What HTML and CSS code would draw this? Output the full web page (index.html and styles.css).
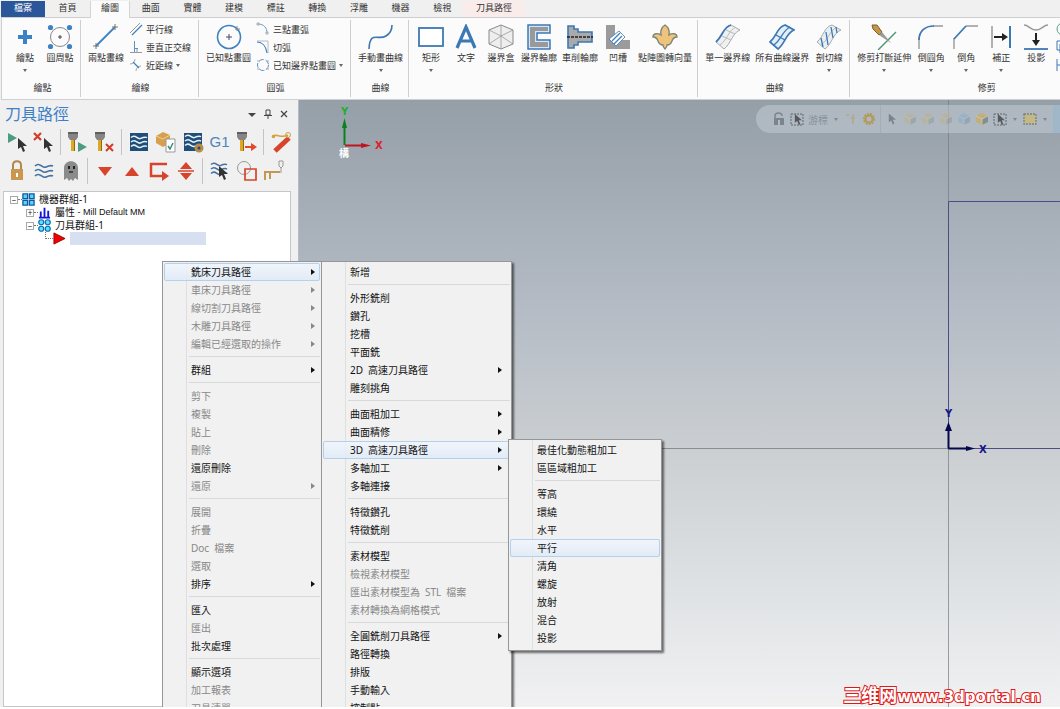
FILE: index.html
```html
<!DOCTYPE html>
<html lang="zh-Hant">

<head>
    <meta charset="UTF-8">
    <meta name="viewport" content="width=device-width, initial-scale=1.0">
    <title>刀具路徑</title>
    <link rel="stylesheet" href="styles.css">
</head>

<body>

    <!-- Shared icon shapes -->
    <svg class="sprite" aria-hidden="true">
        <symbol id="cursor" viewBox="0 0 10 14"><path d="M1 0v11l3-2 2 5 2-1-2-5h4z" fill="#333"/></symbol>
        <symbol id="drill" viewBox="0 0 12 22"><path d="M1 1h10v5l-2 3H3L1 6z" fill="#858585"/><path d="M1 1h10v2H1z" fill="#5f5f5f"/><path d="M4 9h4v11H4z" fill="#e0a820"/><path d="M7 9h1v11H7z" fill="#8a6a20"/></symbol>
        <symbol id="waves" viewBox="0 0 20 18"><path d="M1 4c5-5 7 3 11 1s5-2 7-1M1 9c5-5 7 3 11 1s5-2 7-1M1 14c5-5 7 3 11 1s5-2 7-1" fill="none" stroke="currentColor" stroke-width="1.7"/></symbol>
        <symbol id="cube" viewBox="0 0 14 14"><path d="M1 4l6-3 6 3v6l-6 3-6-3z" fill="currentColor"/><path d="M7 7l6-3v6l-6 3z" fill="#5c7893" opacity=".6"/><path d="M1 4l6 3 6-3M7 7v6" fill="none" stroke="#ccd3d6" stroke-width=".7"/></symbol>
    </svg>

    <div class="app">

        <!-- Ribbon -->
        <header class="ribbon">
            <nav class="tabs">
                <button class="tab tab-file">檔案</button>
                <button class="tab tab-home">首頁</button>
                <button class="tab tab-active">繪圖</button>
                <div class="tab-group">
                    <button class="tab">曲面</button>
                    <button class="tab">實體</button>
                    <button class="tab">建模</button>
                    <button class="tab">標註</button>
                    <button class="tab">轉換</button>
                    <button class="tab">浮雕</button>
                    <button class="tab">機器</button>
                    <button class="tab">檢視</button>
                </div>
                <button class="tab tab-path">刀具路徑</button>
            </nav>

            <div class="ribbon-body">
                <section class="group group-first">
                    <div class="tools">
                        <button class="tool"><svg viewBox="0 0 26 26"><path d="M13 6v14M6 13h14" stroke="#3c82c4" stroke-width="4"/></svg>繪點<i class="caret"></i></button>
                        <button class="tool"><svg viewBox="0 0 26 26"><circle cx="13" cy="13" r="9.5" fill="none" stroke="#888"/><path d="M13 11v4M11 13h4" stroke="#444"/><g fill="#3c82c4"><circle cx="3.500" cy="3.500" r="2.600"/><circle cx="22.500" cy="3.500" r="2.600"/><circle cx="3.500" cy="22.500" r="2.600"/><circle cx="22.500" cy="22.500" r="2.600"/></g></svg>圓周點</button>
                    </div>
                    <h2>繪點</h2>
                </section>

                <section class="group">
                    <div class="tools">
                        <button class="tool"><svg viewBox="0 0 26 26"><path d="M3 22L22 3" stroke="#3c82c4" stroke-width="1.800"/><path d="M3 19v6M0 22h6M22 0v6M19 3h6" stroke="#777"/></svg>兩點畫線</button>
                        <div class="small-tools">
                            <button class="small-tool"><svg viewBox="0 0 14 14"><path d="M1 11L11 1" stroke="#999"/><path d="M3 13L13 3" stroke="#3c82c4" stroke-width="1.300"/></svg>平行線</button>
                            <button class="small-tool"><svg viewBox="0 0 14 14"><path d="M1 12.500h12M8 9v3" stroke="#999"/><path d="M5.500 1v11M6 8.500h3" stroke="#5b91c6"/></svg>垂直正交線</button>
                            <button class="small-tool"><svg viewBox="0 0 14 14"><path d="M1 6c3 0 5-2 5-5M7 13c0-3 2-5 5-5" fill="none" stroke="#aaa"/><path d="M4 4l6 6" stroke="#3c82c4" stroke-width="1.300"/></svg>近距線<i class="caret"></i></button>
                        </div>
                    </div>
                    <h2>繪線</h2>
                </section>

                <section class="group">
                    <div class="tools">
                        <button class="tool"><svg viewBox="0 0 26 26"><circle cx="13" cy="13" r="11.500" fill="none" stroke="#3c82c4" stroke-width="1.600"/><path d="M13 10v6M10 13h6" stroke="#446"/><path d="M21 2v5M19 5h5" stroke="#888"/></svg>已知點畫圓</button>
                        <div class="small-tools">
                            <button class="small-tool"><svg viewBox="0 0 14 14"><path d="M2 2c6 0 9 4 9 9" fill="none" stroke="#6a9bcc"/><path d="M0 2h4M2 0v4M9 11h4M11 9v4" stroke="#aaa"/></svg>三點畫弧</button>
                            <button class="small-tool"><svg viewBox="0 0 14 14"><path d="M1 1h11v12" fill="none" stroke="#bbb"/><path d="M1 2c5 0 9 4 10 11" fill="none" stroke="#3c82c4" stroke-width="1.200"/></svg>切弧</button>
                            <button class="small-tool"><svg viewBox="0 0 14 14"><circle cx="7" cy="7" r="5.500" fill="none" stroke="#5b91c6" stroke-dasharray="5 2"/><path d="M1 3h3M10 3h3M1 11h3M10 11h3" stroke="#aaa"/></svg>已知邊界點畫圓<i class="caret"></i></button>
                        </div>
                    </div>
                    <h2>圓弧</h2>
                </section>

                <section class="group">
                    <div class="tools">
                        <button class="tool"><svg viewBox="0 0 26 26"><path d="M1 25C2 6 10 17 18 12c5-3 6-7 6-11" fill="none" stroke="#3c78b4" stroke-width="1.600"/></svg>手動畫曲線<i class="caret"></i></button>
                    </div>
                    <h2>曲線</h2>
                </section>

                <section class="group">
                    <div class="tools">
                        <button class="tool"><svg viewBox="0 0 26 26"><rect x="1" y="4" width="24" height="18" fill="#fff" stroke="#3c78b4" stroke-width="1.800"/></svg>矩形<i class="caret"></i></button>
                        <button class="tool"><svg viewBox="0 0 26 26"><path d="M4 24L13 3l9 21M7 17h12" fill="none" stroke="#3c78b4" stroke-width="3.200"/></svg>文字</button>
                        <button class="tool"><svg viewBox="0 0 26 26"><path d="M13 1l12 5v14l-12 5-12-5V6z" fill="#eee" stroke="#888"/><path d="M1 6l12 6 12-6M13 12v13M13 1v11M1 20l12-8 12 8" fill="none" stroke="#999" stroke-width=".8"/></svg>邊界盒</button>
                        <button class="tool"><svg viewBox="0 0 26 26"><path d="M2 1h22v8H11v7h13v9H2z" fill="#d5e6f6" stroke="#3c78b4" stroke-width="1.500"/><path d="M4 3h18v4H9v11h13v5H4z" fill="#999"/></svg>邊界輪廓</button>
                        <button class="tool"><svg viewBox="0 0 26 26"><path d="M1 2h6v3h4v3h14v10H11v3H7v3H1z" fill="#aaa" stroke="#3c78b4" stroke-width="1.600"/><path d="M0 13h26" stroke="#222" stroke-width="1.500" stroke-dasharray="3 1"/></svg>車削輪廓</button>
                        <button class="tool"><svg viewBox="0 0 26 26"><path d="M1 1h9v15h15v9H1z" fill="#9b9b9b"/><path d="M4 15L14 7l6 6-9 9z" fill="#fff" stroke="#3c78b4" stroke-width=".8"/><path d="M7 17l8-8M9 20l8-8" stroke="#3c82c4" stroke-width="1.300"/></svg>凹槽</button>
                        <button class="tool"><svg viewBox="0 0 26 26"><path d="M13 1c-3 2-5 5-4 10-3-2-8-2-8 2 3 0 4 1 5 4 1 3 3 4 5 4 0 1 1 3 2 4 1-1 2-3 2-4 2 0 4-1 5-4 1-3 2-4 5-4 0-4-5-4-8-2 1-5-1-8-4-10z" fill="#eec37c" stroke="#7f8478" stroke-width="1.300"/></svg>點陣圖轉向量</button>
                    </div>
                    <h2>形狀</h2>
                </section>

                <section class="group">
                    <div class="tools">
                        <button class="tool"><svg viewBox="0 0 26 26"><path d="M1 18C8 12 8 3 16 1l9 5c-8 3-9 14-16 19z" fill="#eef0f2" stroke="#aaa"/><path d="M5 21c8-6 8-14 16-18M7 12l9 4M11 6l9 4" fill="none" stroke="#bbb"/><path d="M1 18C8 12 8 3 16 1" fill="none" stroke="#3c78b4" stroke-width="1.800"/></svg>單一邊界線</button>
                        <button class="tool"><svg viewBox="0 0 26 26"><path d="M1 18C8 12 8 3 16 1l9 5c-8 3-9 14-16 19z" fill="#e2eefa" stroke="#3c78b4" stroke-width="1.700"/><path d="M5 21c8-6 8-14 16-18M7 11l9 5" fill="none" stroke="#3c78b4" stroke-width="1.300"/></svg>所有曲線邊界</button>
                        <button class="tool"><svg viewBox="0 0 26 26"><path d="M1 18C8 12 8 3 16 1l9 5c-8 3-9 14-16 19z" fill="#e9eef3" stroke="#aaa"/><path d="M5 21c8-6 8-14 16-18" fill="none" stroke="#bbb"/><path d="M5 14l2 9M10 8l2 13M15 3l2 11M20 3l1 6" stroke="#3c78b4" stroke-width="1.300"/></svg>剖切線<i class="caret"></i></button>
                    </div>
                    <h2>曲線</h2>
                </section>

                <section class="group">
                    <div class="tools">
                        <button class="tool"><svg viewBox="0 0 26 26"><path d="M7 26L25 8" stroke="#4f9a78" stroke-width="1.500"/><path d="M1 1h5l5 7-3 3-6-6z" fill="#c79642" stroke="#776038"/><path d="M8 11l3-3 9 11z" fill="#999"/></svg>修剪打斷延伸<i class="caret"></i></button>
                        <button class="tool"><svg viewBox="0 0 26 26"><path d="M1 25V14M15 2h10" stroke="#999" stroke-width="1.400"/><path d="M1 16C1 7 7 2 16 2" fill="none" stroke="#3c78b4" stroke-width="1.700"/></svg>倒圓角<i class="caret"></i></button>
                        <button class="tool"><svg viewBox="0 0 26 26"><path d="M1 25V14M13 2h12" stroke="#999" stroke-width="1.400"/><path d="M1 15L13 2" stroke="#3c78b4" stroke-width="1.800"/></svg>倒角<i class="caret"></i></button>
                        <button class="tool"><svg viewBox="0 0 26 26"><path d="M4 2v22" stroke="#999" stroke-width="1.500"/><path d="M22 2v22" stroke="#3c78b4" stroke-width="2"/><path d="M6 13h9" stroke="#222" stroke-width="2"/><path d="M14 9l6 4-6 4z" fill="#222"/></svg>補正<i class="caret"></i></button>
                        <button class="tool"><svg viewBox="0 0 26 26"><path d="M1 1c5 0 6 5 12 5s7-5 12-5" fill="none" stroke="#999" stroke-width="1.500"/><path d="M1 25h24" stroke="#3c78b4" stroke-width="1.800"/><path d="M13 9v9" stroke="#222" stroke-width="2"/><path d="M9 16h8l-4 6z" fill="#222"/></svg>投影</button>
                        <div class="small-tools">
                            <button class="small-tool" aria-label="封閉全圓"><svg viewBox="0 0 14 14"><circle cx="7" cy="7" r="6" fill="none" stroke="#5aa287"/></svg></button>
                            <button class="small-tool" aria-label="打斷"><svg viewBox="0 0 14 14"><path d="M1 1h9v9H1zM4 4h9v9H4z" fill="none" stroke="#3c78b4"/></svg></button>
                            <button class="small-tool" aria-label="連接"><svg viewBox="0 0 14 14"><path d="M1 1v12M1 7h9l3-5" fill="none" stroke="#3c78b4"/></svg></button>
                        </div>
                    </div>
                    <h2 class="label-wide">修剪</h2>
                </section>
            </div>
        </header>

        <main class="workspace">

            <!-- Toolpath manager -->
            <aside class="panel">
                <div class="panel-title">
                    <h1>刀具路徑</h1>
                    <button aria-label="選單"><svg viewBox="0 0 10 10"><path d="M1 4h8L5 8z" fill="#444"/></svg></button>
                    <button aria-label="固定"><svg viewBox="0 0 10 10"><path d="M3 1h4v5H3zM1 6.500h8M5 6v4" fill="none" stroke="#444"/></svg></button>
                    <button aria-label="關閉"><svg viewBox="0 0 10 10"><path d="M2 2l6 6M8 2L2 8" stroke="#444" stroke-width="1.200"/></svg></button>
                </div>

                <div class="toolbar">
                    <button aria-label="選取全部"><svg viewBox="0 0 22 22"><path d="M2 2l9 5-9 5z" fill="#4c9c84"/><use href="#cursor" x="11" y="7" width="10" height="14"/></svg></button>
                    <button aria-label="取消選取"><svg viewBox="0 0 22 22"><path d="M1 2l7 7M8 2L1 9" stroke="#d23c28" stroke-width="2.200"/><use href="#cursor" x="10" y="7" width="10" height="14"/></svg></button>
                    <i class="rule"></i>
                    <button aria-label="重新計算"><svg viewBox="0 0 22 22"><use href="#drill" x="0" y="0" width="12" height="22"/><path d="M11 11l9 5-9 5z" fill="#4c9c84"/></svg></button>
                    <button aria-label="清除計算"><svg viewBox="0 0 22 22"><use href="#drill" x="0" y="0" width="12" height="22"/><path d="M12 13l7 7M19 13l-7 7" stroke="#d23c28" stroke-width="2"/></svg></button>
                    <i class="rule"></i>
                    <button aria-label="路徑模擬"><svg class="light" viewBox="0 0 22 22"><path d="M2 2h18v18H2z" fill="#1f4e79"/><use href="#waves" x="2" y="3" width="18" height="16"/></svg></button>
                    <button aria-label="實體模擬"><svg viewBox="0 0 22 22"><path d="M1 5l7-4 7 3v8l-7 4-7-4z" fill="#d6a050"/><path d="M1 5l7 3 7-4" fill="none" stroke="#f2cf91"/><path d="M11 8h9v13h-9z" fill="#fff" stroke="#999"/><path d="M13 15l2 3 3-6" fill="none" stroke="#348a76" stroke-width="1.400"/></svg></button>
                    <button aria-label="模擬選項"><svg class="light" viewBox="0 0 22 22"><path d="M2 2h18v18H2z" fill="#1f4e79"/><use href="#waves" x="2" y="2" width="18" height="16"/><circle cx="17" cy="17" r="3" fill="none" stroke="#b68b4b" stroke-width="3"/></svg></button>
                    <button class="g1">G1</button>
                    <button aria-label="高速進給"><svg viewBox="0 0 22 22"><use href="#drill" x="0" y="0" width="12" height="22"/><path d="M9 16h7" stroke="#e04a2a" stroke-width="2"/><path d="M15 12l6 4-6 4z" fill="#e04a2a"/></svg></button>
                    <i class="rule"></i>
                    <button aria-label="刀具管理"><svg viewBox="0 0 22 22"><path d="M5 20L19 7" stroke="#d8432c" stroke-width="5"/><path d="M3 5c4-3 7 3 15-1" fill="none" stroke="#d0a33c" stroke-width="1.600"/><circle cx="3.500" cy="5.500" r="1.800" fill="#d0a33c"/><circle cx="18" cy="4" r="2.500" fill="none" stroke="#d0a33c"/></svg></button>
                </div>
                <div class="toolbar">
                    <button aria-label="鎖定"><svg viewBox="0 0 22 22"><path d="M7 10V5c0-5 8-5 8 0v5" fill="none" stroke="#b4864c" stroke-width="2"/><path d="M5 9h12v11H5z" fill="#c9974e"/><path d="M11 13v4" stroke="#fff" stroke-width="2"/></svg></button>
                    <button aria-label="顯示路徑"><svg class="blue" viewBox="0 0 22 22"><use href="#waves" x="0" y="2" width="22" height="18"/></svg></button>
                    <button aria-label="關閉後處理"><svg viewBox="0 0 22 22"><path d="M4 20V8c0-9 14-9 14 0v12l-3-2-2 3-2-2-2 2-2-3z" fill="#8b8b8b"/><path d="M8 6h2v3H8zM13 6h2v3h-2z" fill="#222"/><path d="M9 11h4v2H9z" fill="#444"/></svg></button>
                    <i class="rule"></i>
                    <button aria-label="下移"><svg viewBox="0 0 22 22"><path d="M4 7h14l-7 9z" fill="#d8432c"/></svg></button>
                    <button aria-label="上移"><svg viewBox="0 0 22 22"><path d="M4 16h14l-7-9z" fill="#d8432c"/></svg></button>
                    <button aria-label="移動插入點"><svg viewBox="0 0 22 22"><path d="M19 4H3v12h12" fill="none" stroke="#d8432c" stroke-width="2.500"/><path d="M14 11l7 5-7 5z" fill="#d8432c"/></svg></button>
                    <button aria-label="捲動"><svg viewBox="0 0 22 22"><path d="M5 9h12l-6-7zM5 13h12l-6 7z" fill="#d8432c"/><path d="M3 11h16" stroke="#d8432c" stroke-width="1.500"/></svg></button>
                    <i class="rule"></i>
                    <button aria-label="選取路徑"><svg class="blue" viewBox="0 0 22 22"><use href="#waves" x="0" y="1" width="20" height="16"/><use href="#cursor" x="9" y="6" width="10" height="14"/></svg></button>
                    <button aria-label="選取圖形"><svg viewBox="0 0 22 22"><circle cx="8" cy="8" r="6.500" fill="none" stroke="#999"/><path d="M9 9h11v11H9z" fill="none" stroke="#d8432c" stroke-width="1.700"/></svg></button>
                    <button aria-label="顯示刀具"><svg viewBox="0 0 22 22"><path d="M2 20v-8h15M7 12v7" fill="none" stroke="#c09a55" stroke-width="2"/><path d="M16 1h4v5l-2 2-2-2zM18 8v5" fill="none" stroke="#999"/></svg></button>
                </div>

                <ul class="tree">
                    <li><i class="box">−</i><i class="dash"></i><svg viewBox="0 0 14 14"><path d="M1 1h5v5H1zM8 1h5v5H8zM1 8h5v5H1zM8 8h5v5H8z" fill="#5fd0ff" stroke="#0b5c9e" stroke-width="1.400"/></svg>機器群組-1</li>
                    <li class="level-1"><i class="box">+</i><i class="dash"></i><svg viewBox="0 0 14 14"><path d="M3 12V6M7 12V2M11 12V5M1 12.500h12" stroke="#1414d8" stroke-width="2"/></svg>屬性&nbsp;<span class="latin">- Mill Default MM</span></li>
                    <li class="level-1"><i class="box">−</i><i class="dash"></i><svg viewBox="0 0 14 14"><g fill="#5fe0ff" stroke="#0b6cae" stroke-width="1.300"><circle cx="3.500" cy="3.500" r="2.700"/><circle cx="10.500" cy="3.500" r="2.700"/><circle cx="3.500" cy="10.500" r="2.700"/><circle cx="10.500" cy="10.500" r="2.700"/></g></svg>刀具群組-1</li>
                    <li class="level-2"><i class="elbow"></i><svg viewBox="0 0 14 14"><path d="M1 1l12 6-12 6z" fill="#f00000" stroke="#900"/></svg><span class="insert"></span></li>
                </ul>
            </aside>

            <!-- Graphics view -->
            <section class="view">
                <svg class="scene">
                    <path d="M649.500 0v700" stroke="#737b82" stroke-opacity=".7"/>
                    <path d="M0 348.500h650" stroke="#878e93"/>
                    <path d="M649.500 348V101.500H2000M649 348.500H2000" fill="none" stroke="#4a4d86"/>
                    <g stroke="#07074f" fill="#07074f"><path d="M649.500 348.500V330M649.500 348.500H668" stroke-width="2"/><path d="M646 331l3.500-9 3.500 9zM667 346l9 2.500-9 2.500z" stroke="none"/></g>
                    <text class="axis" x="646" y="317" fill="#15158a">Y</text>
                    <text class="axis" x="680" y="353" fill="#15158a">X</text>
                    <path d="M45.500 45V27" stroke="#0b8020" stroke-width="2"/><path d="M43 28l2.500-10 2.500 10z" fill="#0b8020"/>
                    <path d="M46 45.500h18" stroke="#c01520" stroke-width="2"/><path d="M62 43l10 2.500-10 2.500z" fill="#c01520"/>
                    <text class="axis" x="42" y="15" fill="#19b32c">Y</text>
                    <text class="axis" x="76" y="49" fill="#e0202c">X</text>
                    <text class="plane" x="40" y="57" fill="#fff">構</text>
                </svg>

                <div class="selection-bar">
                    <svg viewBox="0 0 14 14"><path d="M3 6V4c0-4 7-4 7 0" fill="none" stroke="#7b848c" stroke-width="1.500"/><path d="M2 6h10v7H2z" fill="#7b848c"/><path d="M6 8h2v5H6z" fill="#b4bac1"/></svg>
                    <svg class="soft" viewBox="0 0 14 14"><path d="M1 2h12v11H1z" fill="none" stroke="#3f474d" stroke-dasharray="2 1"/><use href="#cursor" x="4" y="2" width="8" height="11"/></svg>
                    <span class="cursor-text">游標</span>
                    <i class="caret"></i>
                    <svg viewBox="0 0 14 14"><path d="M2 3h3M9 2v10M7 6h4" stroke="#b1a887" stroke-width="1.500"/></svg>
                    <svg viewBox="0 0 14 14"><circle cx="7" cy="7" r="5" fill="none" stroke="#b29a5b" stroke-width="2" stroke-dasharray="2 1"/><circle cx="7" cy="7" r="3.500" fill="none" stroke="#b29a5b" stroke-width="2"/></svg>
                    <i class="bar-rule"></i>
                    <svg class="faint" viewBox="0 0 14 14"><use href="#cursor" x="3" y="1" width="8" height="12"/></svg>
                    <svg class="faint sand" viewBox="0 0 14 14"><use href="#cube"/></svg>
                    <svg class="faint sand" viewBox="0 0 14 14"><use href="#cube"/></svg>
                    <svg class="faint sand" viewBox="0 0 14 14"><use href="#cube"/></svg>
                    <svg class="faint sky" viewBox="0 0 14 14"><use href="#cube"/></svg>
                    <svg class="sand" viewBox="0 0 14 14"><use href="#cube"/></svg>
                    <svg class="soft" viewBox="0 0 14 14"><path d="M1 2h12v11H1z" fill="none" stroke="#3f474d" stroke-dasharray="2 1"/><use href="#cursor" x="4" y="2" width="8" height="11"/></svg>
                    <i class="caret"></i>
                    <svg class="soft" viewBox="0 0 14 14"><path d="M1 2h12v10H1z" fill="#cbb870" stroke="#646b65" stroke-width="1.300" stroke-dasharray="2 1"/></svg>
                    <i class="caret"></i>
                    <span class="bar-end"></span>
                </div>

                <p class="watermark"><span>三维网</span>www.3dportal.cn</p>
            </section>
        </main>

        <!-- Context menu and its submenus -->
        <div class="menu menu-main">
            <button class="item selected more">銑床刀具路徑</button>
            <button class="item more" disabled>車床刀具路徑</button>
            <button class="item more" disabled>線切割刀具路徑</button>
            <button class="item more" disabled>木雕刀具路徑</button>
            <button class="item more" disabled>編輯已經選取的操作</button>
            <hr>
            <button class="item more">群組</button>
            <hr>
            <button class="item" disabled>剪下</button>
            <button class="item" disabled>複製</button>
            <button class="item" disabled>貼上</button>
            <button class="item" disabled>刪除</button>
            <button class="item">還原刪除</button>
            <button class="item more" disabled>還原</button>
            <hr>
            <button class="item" disabled>展開</button>
            <button class="item" disabled>折疊</button>
            <button class="item" disabled>Doc&ensp;檔案</button>
            <button class="item" disabled>選取</button>
            <button class="item more">排序</button>
            <hr>
            <button class="item">匯入</button>
            <button class="item" disabled>匯出</button>
            <button class="item">批次處理</button>
            <hr>
            <button class="item">顯示選項</button>
            <button class="item" disabled>加工報表</button>
            <button class="item" disabled>刀具清單</button>
        </div>

        <div class="menu menu-mill">
            <button class="item">新增</button>
            <hr>
            <button class="item">外形銑削</button>
            <button class="item">鑽孔</button>
            <button class="item">挖槽</button>
            <button class="item">平面銑</button>
            <button class="item more">2D&ensp;高速刀具路徑</button>
            <button class="item">雕刻挑角</button>
            <hr>
            <button class="item more">曲面粗加工</button>
            <button class="item more">曲面精修</button>
            <button class="item selected more">3D&ensp;高速刀具路徑</button>
            <button class="item more">多軸加工</button>
            <button class="item">多軸連接</button>
            <hr>
            <button class="item">特徵鑽孔</button>
            <button class="item">特徵銑削</button>
            <hr>
            <button class="item">素材模型</button>
            <button class="item" disabled>檢視素材模型</button>
            <button class="item" disabled>匯出素材模型為&ensp;STL&ensp;檔案</button>
            <button class="item" disabled>素材轉換為網格模式</button>
            <hr>
            <button class="item more">全圓銑削刀具路徑</button>
            <button class="item">路徑轉換</button>
            <button class="item">排版</button>
            <button class="item">手動輸入</button>
            <button class="item">控制點</button>
        </div>

        <div class="menu menu-3d">
            <button class="item">最佳化動態粗加工</button>
            <button class="item">區區域粗加工</button>
            <hr>
            <button class="item">等高</button>
            <button class="item">環繞</button>
            <button class="item">水平</button>
            <button class="item selected">平行</button>
            <button class="item">清角</button>
            <button class="item">螺旋</button>
            <button class="item">放射</button>
            <button class="item">混合</button>
            <button class="item">投影</button>
        </div>
    </div>

</body>

</html>
```
FILE: styles.css
```css
* {
    box-sizing: border-box;
    margin: 0;
    padding: 0;
}

body {
    height: 100vh;
    padding-bottom: 2px;
    background: #fff;
    font-family: "Noto Sans", "Noto Sans CJK TC", sans-serif;
    font-size: 9px;
    color: #333;
    overflow: hidden;
}

button {
    border: none;
    background: none;
    font: inherit;
    color: inherit;
    white-space: nowrap;
}

.sprite {
    position: absolute;
    width: 0;
    height: 0;
}

.app {
    position: relative;
    display: flex;
    flex-direction: column;
    height: 100%;
    overflow: hidden;
}

.caret {
    border: 2px solid transparent;
    border-top: 3px solid #666;
    border-bottom: none;
}

/* Ribbon */
.ribbon {
    flex: none;
    background: #f0f0f0;
}

.tabs {
    display: flex;
    height: 17px;
    padding: 1px 0 0 1px;
}

.tab {
    height: 16px;
    line-height: 12px;
    padding-bottom: 3px;
}

.tab-file {
    width: 44px;
    background: #2b579a;
    color: #fff;
}

.tab-home {
    width: 45px;
}

.tab-active {
    width: 40px;
    height: 17px;
    background: #fbfbfb;
    border: 1px solid #d4d4d4;
    border-width: 0 1px;
}

.tab-group {
    display: flex;
    width: 333px;
}

.tab-group .tab {
    flex: 1;
}

.tab-path {
    width: 62px;
    background: #fbecec;
}

.ribbon-body {
    display: flex;
    height: 83px;
    margin-left: 1px;
    padding: 2px 0;
    background: #fbfbfb;
    border: 1px solid #cdcfd2;
    border-width: 1px 0 1px 1px;
    overflow: hidden;
}

.group {
    flex: none;
    display: flex;
    flex-direction: column;
    justify-content: space-between;
    padding: 0 5px 0 7px;
    border-right: 1px solid #cfcfcf;
}

.group-first {
    padding-left: 8px;
}

.group h2 {
    padding-bottom: 2px;
    font-size: 9px;
    font-weight: normal;
    line-height: 14px;
    text-align: center;
}

.group .label-wide {
    padding-left: 44px;
}

.tools {
    display: flex;
    gap: 5px;
}

.tool {
    display: flex;
    flex-direction: column;
    align-items: center;
    min-width: 30px;
    padding-top: 4px;
    line-height: 12px;
}

.tool svg {
    width: 26px;
    height: 26px;
    margin-bottom: 2px;
}

.tool .caret {
    margin-top: 5px;
}

.small-tools {
    padding-right: 2px;
}

.small-tool {
    display: flex;
    align-items: center;
    gap: 3px;
    height: 18px;
}

.small-tool svg {
    width: 14px;
    height: 14px;
}

/* Workspace */
.workspace {
    flex: 1;
    display: flex;
    min-height: 0;
}

.panel {
    flex: none;
    display: flex;
    flex-direction: column;
    width: 299px;
    padding: 0 7px 0 3px;
    background: #f0f0f0;
    border-right: 1px solid #b5bcc3;
}

.panel-title {
    display: flex;
    align-items: center;
    gap: 6px;
    height: 27px;
    padding-right: 2px;
}

.panel-title h1 {
    flex: 1;
    padding-left: 2px;
    font-size: 16px;
    font-weight: normal;
    line-height: 22px;
    color: #3f7fc6;
}

.panel-title svg {
    display: block;
    width: 10px;
    height: 10px;
}

.toolbar {
    display: flex;
    align-items: center;
    height: 29px;
}

.toolbar button {
    flex: none;
    width: 27px;
    height: 24px;
}

.toolbar svg {
    display: block;
    width: 22px;
    height: 22px;
    margin: 0 auto;
}

.toolbar .g1 {
    font-family: "Liberation Sans", sans-serif;
    font-size: 15px;
    color: #4a86b8;
}

.rule {
    flex: none;
    width: 1px;
    height: 26px;
    margin: 0 3px;
    background: #c4c4c4;
}

.light {
    color: #e8f1f8;
}

.blue {
    color: #44719e;
}

/* Operations tree */
.tree {
    flex: 1;
    margin-top: 6px;
    padding: 1px 0 0 6px;
    background: #fff;
    border: 1px solid #c3c6ca;
    list-style: none;
    font-size: 10px;
    color: #111;
}

.tree li {
    display: flex;
    align-items: center;
    height: 13px;
    line-height: 13px;
}

.tree .level-1 {
    padding-left: 16px;
}

.tree .level-2 {
    padding-left: 35px;
}

.tree svg {
    width: 13px;
    height: 13px;
    margin-right: 4px;
}

.box {
    width: 8px;
    height: 8px;
    border: 1px solid #a9a9a9;
    font-size: 8px;
    font-style: normal;
    line-height: 5px;
    text-align: center;
}

.dash {
    width: 4px;
    border-top: 1px dotted #777;
}

.latin {
    font-family: "Liberation Sans", sans-serif;
    font-size: 9px;
}

.elbow {
    align-self: flex-start;
    width: 8px;
    height: 7px;
    border: 1px dotted #777;
    border-width: 0 0 1px 1px;
}

.insert {
    width: 136px;
    height: 13px;
    background: #d6e0f1;
}

/* Graphics view */
.view {
    position: relative;
    flex: 1;
    min-width: 0;
    background: linear-gradient(#959fa8, #b5bcc5 35%, #cbcfd2 58%, #e0e3e6 82%, #f1f1f2);
    overflow: hidden;
}

.scene {
    position: absolute;
    inset: 0;
    width: 100%;
    height: 100%;
}

.axis {
    font: bold 10px "DejaVu Sans", sans-serif;
}

.plane {
    font: bold 10px "Noto Sans CJK TC", sans-serif;
}

.selection-bar {
    position: relative;
    display: flex;
    align-items: center;
    gap: 4px;
    width: 304px;
    height: 28px;
    margin: 5px 0 0 auto;
    padding-left: 16px;
    background: rgba(205, 212, 222, 0.45);
    border-radius: 14px 0 0 14px;
}

.selection-bar svg {
    flex: none;
    width: 14px;
    height: 14px;
}

.selection-bar .caret {
    margin: 0 2px;
    opacity: 0.6;
}

.cursor-text {
    font-size: 10px;
    color: #87909a;
}

.bar-rule {
    width: 1px;
    height: 28px;
    background: #a4acb5;
}

.soft {
    opacity: 0.7;
}

.faint {
    opacity: 0.4;
}

.sand {
    color: #c2ae77;
}

.sky {
    color: #7ea9c9;
}

.bar-end {
    flex: 1;
    height: 28px;
    background: #9fb7c9;
}

.watermark {
    position: absolute;
    right: 19px;
    bottom: 0;
    font: bold 15px "DejaVu Sans", "Noto Sans CJK SC", sans-serif;
    line-height: 20px;
    color: #fff;
    -webkit-text-stroke: 2px #e01818;
    paint-order: stroke fill;
}

.watermark span {
    font-family: "Noto Sans CJK SC", sans-serif;
    font-size: 18px;
}

/* Context menus */
.menu {
    position: absolute;
    display: flex;
    flex-direction: column;
    padding: 1px 1px 3px;
    background: linear-gradient(90deg, transparent 23px, #dedfe0 23px, #dedfe0 24px, transparent 24px) #f1f1f1;
    border: 1px solid #979797;
    box-shadow: 2px 2px 2px rgba(0, 0, 0, 0.55);
    font-size: 10px;
    color: #111;
}

.menu-main {
    left: 162px;
    top: 261px;
    width: 160px;
}

.menu-mill {
    left: 321px;
    top: 261px;
    width: 191px;
}

.menu-3d {
    left: 508px;
    top: 439px;
    width: 154px;
}

.menu hr {
    flex: none;
    height: 1px;
    margin: 3px 0 4px 25px;
    border: none;
    background: #d9d9d9;
}

.item {
    position: relative;
    flex: none;
    height: 18px;
    padding-left: 26px;
    border: 1px solid transparent;
    border-radius: 2px;
    line-height: 16px;
    text-align: left;
}

.item:disabled {
    color: #888;
}

.item.selected {
    background: linear-gradient(rgba(240, 246, 253, 0.8), rgba(222, 234, 248, 0.8));
    border-color: #b5d0ea;
}

.more::after {
    content: "";
    position: absolute;
    right: 4px;
    top: 5px;
    border: 3px solid transparent;
    border-left: 4px solid currentColor;
    border-right: none;
}

.menu-mill .more::after {
    right: 7px;
}
```
